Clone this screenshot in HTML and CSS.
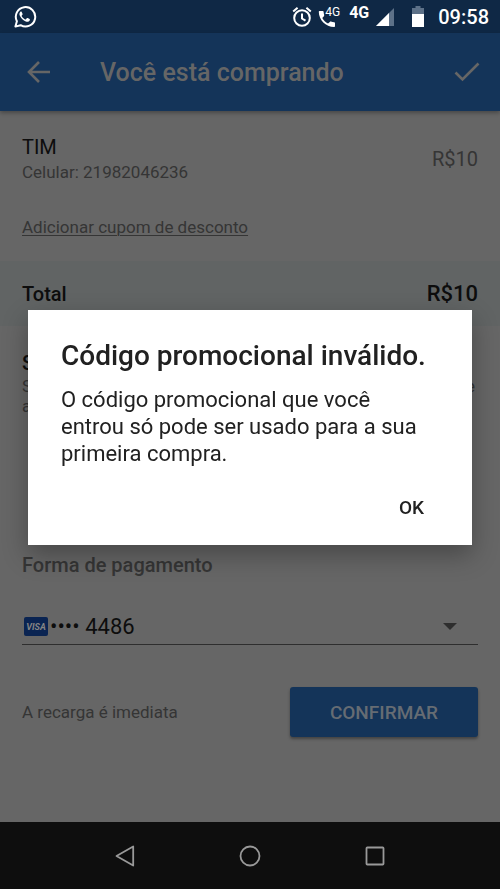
FILE: index.html
```html
<!DOCTYPE html>
<html lang="pt-BR">
<head>
  <meta charset="utf-8">
  <meta name="viewport" content="width=device-width, initial-scale=1">
  <title>Você está comprando</title>
  <link rel="stylesheet" href="styles.css">
</head>
<body>
  <div class="status">
    <svg class="status-app" width="24" height="24" viewBox="0 0 24 24" aria-hidden="true">
      <path d="M2.400 21.600l1.500-5.300A9.700 9.700 0 1 1 7.600 20.200z" fill="none" stroke="#fff" stroke-width="2" stroke-linejoin="round"/>
      <path d="M8.600 6.800c-.5-.4-1-.2-1.400.2-1 1.100-1 2.600-.2 4.100 1.300 2.500 3.200 4.300 5.800 5.400 1.600.6 3.200.2 3.900-1 .3-.7.3-1.200-.1-1.500l-1.900-1c-.4-.2-.7-.1-.9.200l-.9 1.100c-.2.2-.5.2-.8.1-1.500-.7-2.600-1.700-3.400-3.100-.2-.3-.1-.5.1-.8l.7-.9c.1-.2.2-.4.1-.7z" fill="#fff"/>
    </svg>
    <div class="status-right">
      <svg width="20" height="22" viewBox="0 0 20 22" aria-hidden="true">
        <g fill="none" stroke="#fff" stroke-width="2">
          <circle cx="10" cy="12" r="7.800"/>
          <path d="M1.200 5.400L5.600 1.700M18.800 5.400L14.400 1.700M10 7.500V12.500L13.500 14.700"/>
        </g>
      </svg>
      <span class="call">
        <svg width="18" height="18" viewBox="0 0 18 18" aria-hidden="true">
          <path d="M1.500 1H4.800C5.300 1 5.600 1.300 5.600 1.800 5.700 3 5.900 4.100 6.200 5.100 6.300 5.500 6.200 5.900 5.900 6.200L4.300 8C5.700 10.500 7.500 12.300 10 13.600L11.800 11.900C12.100 11.600 12.500 11.500 12.900 11.600 14 12 15.100 12.200 16.200 12.200 16.700 12.200 17 12.500 17 13V16.200C17 16.700 16.700 17 16.200 17 7.700 17 .8 10 .8 1.800.8 1.300 1 1 1.500 1z" fill="#fff"/>
        </svg>
        <span class="call-tag">4G</span>
      </span>
      <span class="network">4G</span>
      <svg class="signal" width="18" height="18" viewBox="0 0 18 18" aria-hidden="true">
        <path d="M18 0V18H0z" fill="#5d7188"/>
        <path d="M13 5V18H0z" fill="#fff"/>
      </svg>
      <svg class="battery" width="12" height="21" viewBox="0 0 12 21" aria-hidden="true">
        <path d="M3.500 0H8.500V2H12V9H0V2H3.500z" fill="#5d7188"/>
        <path d="M0 8H12V21H0z" fill="#fff"/>
      </svg>
      <time class="clock">09:58</time>
    </div>
  </div>

  <header class="toolbar">
    <button class="icon-button" aria-label="Voltar">
      <svg width="24" height="24" viewBox="0 0 24 24"><path d="M12 2L2 12L12 22M2 12H23" fill="none" stroke="currentColor" stroke-width="2.600"/></svg>
    </button>
    <h1 class="toolbar-title">Você está comprando</h1>
    <button class="icon-button" aria-label="Concluir">
      <svg width="26" height="20" viewBox="0 0 26 20"><path d="M1.500 10.500L8.500 17.500L24.500 1.500" fill="none" stroke="currentColor" stroke-width="2.600"/></svg>
    </button>
  </header>

  <main class="page">
    <section class="item">
      <div>
        <h2 class="heading item-name">TIM</h2>
        <p class="detail">Celular: 21982046236</p>
      </div>
      <span class="price">R$10</span>
    </section>
    <a class="coupon" href="#cupom">Adicionar cupom de desconto</a>
    <section class="total">
      <h2 class="heading">Total</h2>
      <span class="total-price">R$10</span>
    </section>
    <section class="notice">
      <h2 class="heading">S</h2>
      <p class="notice-line"><span>S</span><span>e</span></p>
      <p class="notice-line">a</p>
    </section>
    <section class="payment">
      <label class="payment-label" for="card">Forma de pagamento</label>
      <div class="card-field">
        <svg width="24" height="19" viewBox="0 0 24 19" aria-hidden="true">
          <rect width="24" height="19" rx="2" fill="#0a2452"/>
          <text x="12" y="13" text-anchor="middle" class="card-brand">VISA</text>
        </svg>
        <select class="card-select" id="card"><option>•••• 4486</option></select>
        <svg class="caret" width="14" height="7" viewBox="0 0 14 7" aria-hidden="true"><path d="M0 0H14L7 7z" fill="#2e2e2e"/></svg>
      </div>
    </section>
    <section class="submit">
      <p class="detail">A recarga é imediata</p>
      <button class="confirm">CONFIRMAR</button>
    </section>
  </main>

  <nav class="system-nav">
    <button class="icon-button" aria-label="Voltar ao anterior"><svg width="22" height="22" viewBox="0 0 22 22"><path d="M19.200 1.500V20.500L2.500 11z" fill="none" stroke="currentColor" stroke-width="1.800" stroke-linejoin="round"/></svg></button>
    <button class="icon-button" aria-label="Início"><svg width="22" height="22" viewBox="0 0 22 22"><circle cx="11" cy="11" r="9.500" fill="none" stroke="currentColor" stroke-width="1.800"/></svg></button>
    <button class="icon-button" aria-label="Recentes"><svg width="22" height="22" viewBox="0 0 22 22"><rect x="2.500" y="2.500" width="17" height="17" rx=".8" fill="none" stroke="currentColor" stroke-width="1.800"/></svg></button>
  </nav>

  <div class="overlay">
    <div class="dialog" role="alertdialog" aria-labelledby="dialog-title" aria-describedby="dialog-text">
      <h2 class="dialog-title" id="dialog-title">Código promocional inválido.</h2>
      <p class="dialog-text" id="dialog-text">O código promocional que você entrou só pode ser usado para a sua primeira compra.</p>
      <button class="dialog-ok">OK</button>
    </div>
  </div>
</body>
</html>
```
FILE: styles.css
```css
* {
  box-sizing: border-box;
}

body {
  display: flex;
  flex-direction: column;
  min-height: 100vh;
  margin: 0;
  background: #666;
  color: #0d0d0d;
  font-family: Roboto, sans-serif;
}

h1, h2, p {
  margin: 0;
}

button, select {
  border: 0;
  padding: 0;
  background: none;
  color: inherit;
  font-family: inherit;
}

svg {
  display: block;
  flex: none;
}

/* Status bar */
.status {
  display: flex;
  align-items: center;
  justify-content: space-between;
  height: 33px;
  padding: 0 11px 0 13px;
  background: #0f2845;
  color: #fff;
}

.status-right {
  display: flex;
  align-items: center;
}

.call {
  display: flex;
  align-items: flex-end;
  position: relative;
  width: 22px;
  height: 22px;
  margin-left: 6px;
}

.call-tag {
  position: absolute;
  top: 0;
  right: 0;
  font-size: 12px;
  line-height: 12px;
}

.network {
  align-self: flex-start;
  margin: 0 7px 0 9px;
  font-size: 16px;
  font-weight: 700;
  line-height: 16px;
}

.battery {
  margin: 0 14px 0 18px;
}

.clock {
  font-size: 20px;
  font-weight: 500;
}

/* Toolbar */
.toolbar {
  display: flex;
  align-items: center;
  height: 78px;
  padding: 0 20px 0 27px;
  background: #143459;
  color: #666;
  box-shadow: 0 2px 4px rgba(0, 0, 0, 0.3);
}

.toolbar-title {
  flex: 1;
  padding-left: 49px;
  font-size: 25px;
  font-weight: 500;
}

/* Order */
.page {
  flex: 1;
  padding-top: 23px;
}

.heading {
  font-size: 20px;
  font-weight: 500;
  line-height: 26px;
}

.item-name {
  font-weight: 400;
}

.detail {
  color: #353535;
  font-size: 17px;
  line-height: 24px;
}

.item {
  display: flex;
  align-items: center;
  justify-content: space-between;
  padding: 0 22px;
}

.price {
  color: #353535;
  font-size: 20px;
}

.coupon {
  display: block;
  width: fit-content;
  margin: 31px 22px 22px;
  color: #353535;
  font-size: 17px;
  line-height: 24px;
  text-decoration-thickness: 1px;
  text-underline-offset: 2px;
}

.total {
  display: flex;
  align-items: center;
  justify-content: space-between;
  height: 65px;
  padding: 0 22px;
  background: #616464;
}

.total-price {
  font-size: 22px;
  font-weight: 500;
}

.notice {
  height: 226px;
  padding: 24px 25px 0 22px;
}

.notice-line {
  display: flex;
  justify-content: space-between;
  color: #353535;
  font-size: 17px;
  line-height: 20px;
}

/* Payment */
.payment {
  padding: 0 22px;
}

.payment-label {
  display: block;
  color: #353535;
  font-size: 20px;
  font-weight: 500;
  line-height: 26px;
}

.card-field {
  display: flex;
  align-items: center;
  height: 36px;
  margin-top: 31px;
  padding: 0 21px 0 2px;
  border-bottom: 1px solid #2e2e2e;
}

.card-brand {
  fill: #858585;
  font-size: 9px;
  font-style: italic;
  font-weight: 700;
}

.card-select {
  flex: 1;
  margin-left: 2px;
  appearance: none;
  font-size: 22px;
}

.submit {
  display: flex;
  align-items: center;
  justify-content: space-between;
  margin-top: 42px;
  padding: 0 22px;
}

.confirm {
  height: 50px;
  padding: 0 40px;
  border-radius: 3px;
  background: #143459;
  box-shadow: 0 2px 3px rgba(0, 0, 0, 0.35);
  color: #666c73;
  font-size: 19px;
  font-weight: 500;
}

/* System navigation */
.system-nav {
  display: flex;
  align-items: center;
  justify-content: center;
  gap: 103px;
  height: 67px;
  background: #0e0e0e;
  color: #999;
}

/* Dialog */
.overlay {
  display: flex;
  align-items: center;
  position: fixed;
  inset: 33px 0 67px;
  padding: 0 28px;
}

.dialog {
  display: flex;
  flex-direction: column;
  width: 100%;
  padding: 28px 33px 18px;
  background: #fff;
  box-shadow: 0 10px 24px rgba(0, 0, 0, 0.3);
  color: #212121;
}

.dialog-title {
  font-size: 28px;
  font-weight: 500;
  line-height: 36px;
}

.dialog-text {
  padding-right: 20px;
  margin-top: 12px;
  font-size: 22px;
  line-height: 27px;
}

.dialog-ok {
  align-self: flex-end;
  height: 40px;
  margin-top: 20px;
  padding: 0 15px;
  font-size: 19px;
  font-weight: 500;
}
```
